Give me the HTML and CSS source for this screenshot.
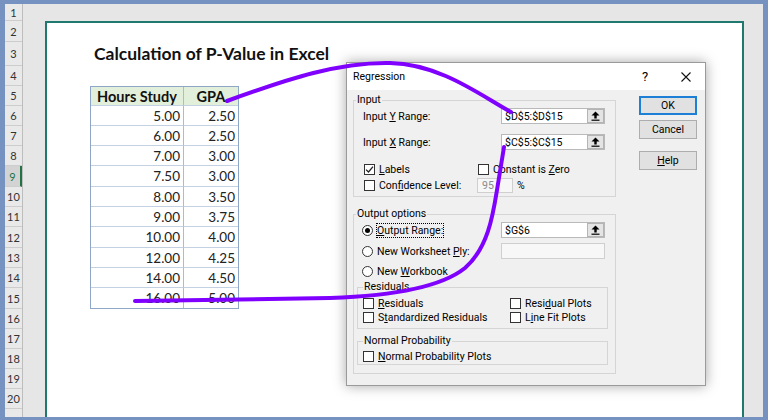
FILE: index.html
```html
<!DOCTYPE html>
<html>
<head>
<meta charset="utf-8">
<link rel="stylesheet" href="styles.css">
</head>
<body>
<div class="frame">
  <div class="rowheads">
    <div class="rh h17">1</div>
    <div class="rh h21">2</div>
    <div class="rh h24">3</div>
    <div class="rh">4</div>
    <div class="rh">5</div>
    <div class="rh">6</div>
    <div class="rh">7</div>
    <div class="rh">8</div>
    <div class="rh h21 sel">9</div>
    <div class="rh">10</div>
    <div class="rh">11</div>
    <div class="rh h21">12</div>
    <div class="rh">13</div>
    <div class="rh">14</div>
    <div class="rh h21">15</div>
    <div class="rh">16</div>
    <div class="rh">17</div>
    <div class="rh">18</div>
    <div class="rh">19</div>
    <div class="rh">20</div>
    <div class="rh"></div>
  </div>
  <div class="sheet">
    <div class="canvas">
      <h1 class="title">Calculation of P-Value in Excel</h1>
      <div class="tbl">
        <div class="th">Hours Study</div><div class="th">GPA</div>
        <div class="td">5.00</div><div class="td">2.50</div>
        <div class="td">6.00</div><div class="td">2.50</div>
        <div class="td">7.00</div><div class="td">3.00</div>
        <div class="td">7.50</div><div class="td">3.00</div>
        <div class="td">8.00</div><div class="td">3.50</div>
        <div class="td">9.00</div><div class="td">3.75</div>
        <div class="td">10.00</div><div class="td">4.00</div>
        <div class="td">12.00</div><div class="td">4.25</div>
        <div class="td">14.00</div><div class="td">4.50</div>
        <div class="td last">16.00</div><div class="td last">5.00</div>
      </div>

      <div class="dialog">
        <div class="dtitle">
          <span class="dname">Regression</span>
          <span class="qm">?</span>
          <svg class="close" width="10" height="10" viewBox="0 0 10 10"><path d="M0.5 0.5 L9.5 9.5 M9.5 0.5 L0.5 9.5" stroke="#111" stroke-width="1.1" fill="none"/></svg>
        </div>
        <div class="dbody">
          <div class="groups">
            <fieldset class="grp ginput">
              <legend>Input</legend>
              <div class="frow r1">
                <span>Input <u>Y</u> Range:</span>
                <div class="rng"><span class="val">$D$5:$D$15</span><b class="pick"><svg width="9" height="10" viewBox="0 0 9 10"><path d="M4.5 0.5 L0.5 4.5 H3.3 V7.5 H5.7 V4.5 H8.5 Z" fill="#000"/><rect x="0.5" y="8.6" width="8" height="1.2" fill="#000"/></svg></b></div>
              </div>
              <div class="frow r2">
                <span>Input <u>X</u> Range:</span>
                <div class="rng"><span class="val">$C$5:$C$15</span><b class="pick"><svg width="9" height="10" viewBox="0 0 9 10"><path d="M4.5 0.5 L0.5 4.5 H3.3 V7.5 H5.7 V4.5 H8.5 Z" fill="#000"/><rect x="0.5" y="8.6" width="8" height="1.2" fill="#000"/></svg></b></div>
              </div>
              <div class="crow r3">
                <span class="cb"><i class="box"><svg width="9" height="9" viewBox="0 0 9 9"><path d="M1 4.6 L3.5 7 L8 1.6" stroke="#222" stroke-width="1.3" fill="none"/></svg></i><span><u>L</u>abels</span></span>
                <span class="cb"><i class="box"></i><span>Constant is <u>Z</u>ero</span></span>
              </div>
              <div class="crow r4">
                <span class="cb"><i class="box"></i><span>Con<u>f</u>idence Level:</span></span>
                <span class="confwrap"><span class="confin">95</span><span class="pct">%</span></span>
              </div>
            </fieldset>

            <fieldset class="grp goutput">
              <legend>Output options</legend>
              <div class="frow o1">
                <span class="rb"><i class="dot on"></i><span class="focus"><u>O</u>utput Range:</span></span>
                <div class="rng"><span class="val">$G$6</span><b class="pick"><svg width="9" height="10" viewBox="0 0 9 10"><path d="M4.5 0.5 L0.5 4.5 H3.3 V7.5 H5.7 V4.5 H8.5 Z" fill="#000"/><rect x="0.5" y="8.6" width="8" height="1.2" fill="#000"/></svg></b></div>
              </div>
              <div class="frow o2">
                <span class="rb"><i class="dot"></i><span>New Worksheet <u>P</u>ly:</span></span>
                <div class="rng dis"></div>
              </div>
              <div class="frow o3">
                <span class="rb"><i class="dot"></i><span>New <u>W</u>orkbook</span></span>
              </div>
              <fieldset class="sub gres">
                <legend>Residuals</legend>
                <div class="two">
                  <span class="cb"><i class="box"></i><span><u>R</u>esiduals</span></span>
                  <span class="cb"><i class="box"></i><span>Resi<u>d</u>ual Plots</span></span>
                  <span class="cb"><i class="box"></i><span>S<u>t</u>andardized Residuals</span></span>
                  <span class="cb"><i class="box"></i><span>L<u>i</u>ne Fit Plots</span></span>
                </div>
              </fieldset>
              <fieldset class="sub gnp">
                <legend>Normal Probability</legend>
                <div class="one">
                  <span class="cb"><i class="box"></i><span><u>N</u>ormal Probability Plots</span></span>
                </div>
              </fieldset>
            </fieldset>
          </div>
          <div class="btns">
            <button class="btn ok">OK</button>
            <button class="btn cancel">Cancel</button>
            <button class="btn help"><u>H</u>elp</button>
          </div>
        </div>
      </div>
    </div>
  </div>
</div>
<svg class="ink" width="768" height="420" viewBox="0 0 768 420">
  <path d="M227 101 C290 78, 340 62, 390 63 C440 64, 480 95, 511 112" stroke="#7f00ff" stroke-width="4" fill="none" stroke-linecap="round"/>
  <path d="M135 301 L330 298 C390 296, 440 288, 465 268 C488 248, 493 215, 497 190 L504 147" stroke="#7f00ff" stroke-width="4" fill="none" stroke-linecap="round" stroke-linejoin="round"/>
</svg>
</body>
</html>
```

FILE: styles.css
```css
* { box-sizing: border-box; }
body {
  margin: 0;
  position: relative;
  width: 768px;
  height: 420px;
  overflow: hidden;
  background: #e6e6e6;
}
.frame {
  width: 768px;
  height: 420px;
  border-style: solid;
  border-color: #7592c0;
  border-width: 4px 5px 3px 5px;
  display: flex;
  background: #e6e6e6;
  overflow: hidden;
}
.rowheads {
  width: 18px;
  flex: none;
  border-right: 1px solid #bdbdbd;
  display: flex;
  flex-direction: column;
  font: 11px Lato, sans-serif;
  color: #333;
  background: #e9e9e9;
}
.rh {
  flex: none;
  height: 20px;
  display: flex;
  align-items: center;
  justify-content: center;
  border-bottom: 1px solid #cdcdcd;
}
.rh.h17 { height: 17px; }
.rh.h21 { height: 21px; }
.rh.h24 { height: 24px; }
.rh.sel {
  background: #d3d3d3;
  color: #217346;
  border-right: 2px solid #217346;
}
.sheet {
  flex: 1;
  padding: 17px 19px 0 22px;
  display: flex;
  flex-direction: column;
}
.canvas {
  flex: 1;
  border: 2px solid #20796f;
  border-bottom: none;
  background: #fff;
  position: relative;
}
.title {
  margin: 21px 0 0 47px;
  font: bold 17.5px/20px Lato, sans-serif;
  color: #111;
}
.tbl {
  margin: 22px 0 0 43px;
  display: grid;
  width: 149px;
  grid-template-columns: 93px 54px;
  grid-template-rows: 19px 20px 20px 20px 21px 20px 20px 21px 20px 20px 20px;
  border: 1px solid #8fa7c6;
  font: 13.5px Lato, sans-serif;
  color: #222;
}
.th, .td {
  border-bottom: 1px solid #c3d1e3;
  display: flex;
  align-items: center;
}
.th:nth-child(odd), .td:nth-child(odd) { border-right: 1px solid #a9bcd5; }
.th {
  background: #e2efda;
  font-weight: bold;
  font-size: 14.5px;
  justify-content: center;
  color: #111;
}
.td {
  justify-content: flex-end;
  padding-right: 3px;
}
.td.last { border-bottom: none; }

/* dialog */
.dialog {
  position: absolute;
  left: 299px;
  top: 39px;
  width: 360px;
  height: 324px;
  border: 1px solid #9a9a9a;
  background: #f0f0f0;
  box-shadow: 0 0 12px rgba(0,0,0,0.35);
  font: 10.5px Roboto, sans-serif;
  color: #000;
  display: flex;
  flex-direction: column;
}
.dtitle {
  height: 27px;
  background: #fff;
  display: flex;
  align-items: center;
  padding-left: 6px;
  flex: none;
}
.dname { flex: 1; font-size: 10.5px; }
.qm {
  width: 12px;
  text-align: center;
  font-size: 13px;
  margin-right: 30px;
}
.close { margin-right: 14px; }
.dbody {
  flex: 1;
  display: flex;
  padding: 4px 8px 11px 6px;
}
.groups { width: 263px; display: flex; flex-direction: column; }
fieldset {
  margin: 0;
  min-width: 0;
  border: 1px solid #d5d5d5;
}
legend {
  font: 10.5px/12px Roboto, sans-serif;
  padding: 0 1px;
}
.grp { padding: 0 10px 3px 9px; }
.grp > legend { margin-left: -7px; }
.goutput { margin-top: 11px; padding-bottom: 8px; }
.frow {
  display: grid;
  grid-template-columns: 1fr 104px;
  align-items: center;
  height: 16px;
}
.ginput .r1 { margin-top: 2px; }
.ginput .r2 { margin-top: 10px; }
.crow {
  display: grid;
  grid-template-columns: 114px 1fr;
  align-items: center;
}
.r3 { margin-top: 13px; height: 13px; }
.r4 { margin-top: 2px; height: 15px; }
.cb, .rb { display: flex; align-items: center; white-space: nowrap; }
.box {
  width: 11px;
  height: 11px;
  border: 1px solid #333;
  background: #fff;
  margin: 0 4px 0 1px;
  flex: none;
  display: flex;
  align-items: center;
  justify-content: center;
}
.dot {
  width: 11px;
  height: 11px;
  border: 1px solid #333;
  border-radius: 50%;
  background: #fff;
  margin: 0 4px 0 -1px;
  flex: none;
  display: flex;
  align-items: center;
  justify-content: center;
}
.dot.on::after {
  content: "";
  width: 5px;
  height: 5px;
  border-radius: 50%;
  background: #000;
}
.focus { outline: 1px dotted #000; outline-offset: 0; }
.rng {
  height: 16px;
  border: 1px solid #b9b9b9;
  background: #fff;
  display: flex;
  align-items: center;
  padding-left: 3px;
}
.rng .val { flex: 1; }
.rng.dis { background: #f7f7f7; border-color: #cfcfcf; }
.pick {
  width: 17px;
  height: 14px;
  background: #e4e4e4;
  border: 1px solid #b4b4b4;
  display: flex;
  align-items: center;
  justify-content: center;
}
.confwrap { display: flex; align-items: center; }
.confin {
  width: 36px;
  height: 15px;
  border: 1px solid #cfcfcf;
  background: #f7f7f7;
  color: #8a8a8a;
  padding-left: 4px;
  display: flex;
  align-items: center;
}
.pct { margin-left: 4px; }
.goutput .o1 { margin-top: 2px; }
.goutput .o2 { margin-top: 5px; }
.goutput .o3 { margin-top: 5px; height: 14px; }
.sub {
  margin: 3px -3px 0 -6px;
  padding: 0 4px 4px 5px;
}
.two {
  display: grid;
  grid-template-columns: 147px 1fr;
  grid-auto-rows: 14px;
  align-items: center;
  margin-top: 3px;
}
.two .box, .one .box { margin-left: 0; }
.gnp { margin-top: 6px; padding-bottom: 1px; }
.one { height: 14px; margin-top: 2px; display: flex; align-items: center; }
.btns {
  width: 58px;
  margin-left: 23px;
  padding-top: 2px;
  display: flex;
  flex-direction: column;
}
.btn {
  height: 19px;
  padding: 0;
  font: 10.5px Roboto, sans-serif;
  color: #000;
  background: #e1e1e1;
  border: 1px solid #adadad;
}
.btn.ok { border: 2px solid #1e7fd6; margin-bottom: 5px; }
.btn.cancel { margin-bottom: 12px; }
.ink {
  position: absolute;
  left: 0;
  top: 0;
  pointer-events: none;
}
```
